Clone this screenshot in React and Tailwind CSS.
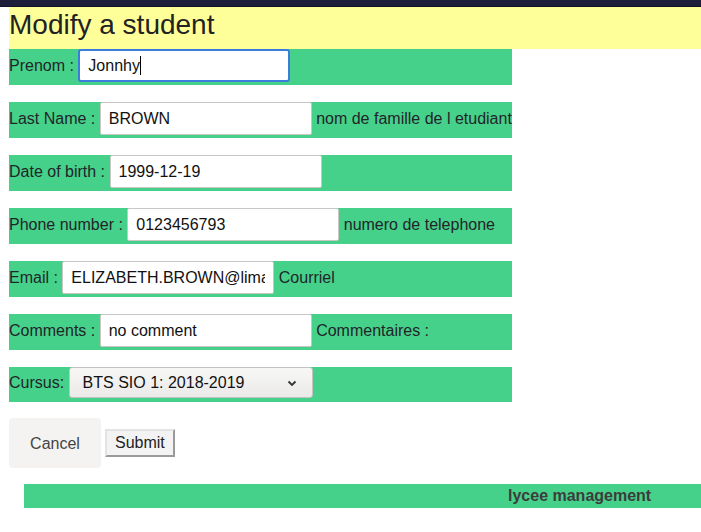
import React from "react";

function FakeInput({ value, width = "w-[212px]", focused = false }) {
  return (
    <div
      className={
        "h-[33px] shrink-0 bg-white text-[16px] text-[#111] " +
        width +
        (focused
          ? " border-2 border-[#3b7ddd] rounded-[3px] px-[8px] leading-[29px]"
          : " border border-[#c9c7c3] rounded-[2px] px-[8px] leading-[31px]")
      }
    >
      <div className="overflow-hidden whitespace-nowrap">
        {value}
        {focused && <span className="inline-block w-[1px] h-[19px] bg-black align-[-4px]" />}
      </div>
    </div>
  );
}

function Row({ label, children, after, h = "h-[36px]" }) {
  return (
    <div className={"w-[503px] bg-[#46d18a] flex items-start mb-[17px] " + h}>
      <span className="whitespace-pre leading-[33px]">{label}</span>
      {children}
      {after && <span className="whitespace-pre leading-[33px]">{" " + after}</span>}
    </div>
  );
}

export default function App() {
  return (
    <div className="min-h-[532px] bg-white font-['Liberation_Sans',Arial,sans-serif] text-[16px] text-[#212529]">
      <div className="h-[7px] bg-[#1c1e3a] border-b border-[#111226]" />
      <div className="pl-[9px]">
        <div className="h-[42px] bg-[#ffff99] text-[28px] leading-[36px] text-[#222]">Modify a student</div>
        <Row label="Prenom : ">
          <FakeInput value="Jonnhy" focused />
        </Row>
        <Row label="Last Name : " after="nom de famille de l etudiant">
          <FakeInput value="BROWN" />
        </Row>
        <Row label="Date of birth : ">
          <FakeInput value="1999-12-19" />
        </Row>
        <Row label="Phone number : " after="numero de telephone">
          <FakeInput value="0123456793" />
        </Row>
        <Row label="Email : " after="Courriel">
          <FakeInput value="ELIZABETH.BROWN@limayrac.fr" />
        </Row>
        <Row label="Comments : " after="Commentaires :">
          <FakeInput value="no comment" />
        </Row>
        <div className="w-[503px] h-[35px] bg-[#46d18a] flex items-start mb-[16px]">
          <span className="whitespace-pre leading-[31px]">{"Cursus: "}</span>
          <div className="w-[244px] h-[31px] border border-[#c4c3c1] rounded-[3px] bg-gradient-to-b from-[#f7f7f6] to-[#ebeae9] flex items-center pl-[13px] pr-[15px] text-[#111]">
            <span className="flex-1 leading-[29px]">BTS SIO 1: 2018-2019</span>
            <svg width="10" height="7" viewBox="0 0 10 7" className="mt-[1px]">
              <path d="M1.5 1.5 L5 5 L8.5 1.5" fill="none" stroke="#333" strokeWidth="1.8" />
            </svg>
          </div>
        </div>
        <div className="flex items-center">
          <div className="w-[92px] h-[50px] bg-[#f4f3f2] rounded-[4px] flex items-center justify-center text-[#444] pt-[1px]">
            Cancel
          </div>
          <div className="ml-[4px] h-[28px] px-[8px] bg-[#f3f3f3] border-2 border-t-[#e3e3e3] border-l-[#e3e3e3] border-b-[#9a9a9a] border-r-[#9a9a9a] leading-[24px] text-[#222]">
            Submit
          </div>
        </div>
        <div className="mt-[16px] ml-[15px] h-[24px] bg-[#46d18a] pl-[484px] leading-[24px] font-bold text-[#3c3c3c] whitespace-nowrap">
          lycee management
        </div>
      </div>
    </div>
  );
}
